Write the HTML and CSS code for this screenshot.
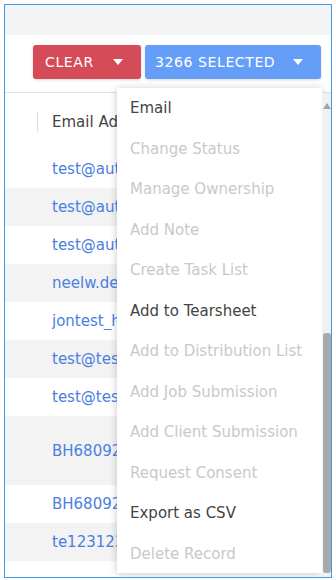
FILE: index.html
```html
<!DOCTYPE html>
<html lang="en">
<head>
    <meta charset="UTF-8">
    <meta name="viewport" content="width=device-width, initial-scale=1.0">
    <title>Records</title>
    <link rel="stylesheet" href="styles.css">
</head>
<body>

    <div class="frame">
        <div class="topbar"></div>

        <div class="toolbar">
            <button class="btn btn-clear">CLEAR <span class="caret"></span></button>
            <button class="btn btn-selected">3266&nbsp;SELECTED <span class="caret"></span></button>
        </div>

        <div class="table">
            <div class="head-row">
                <span class="sep"></span>
                <span class="cell head-cell">Email Address</span>
            </div>
            <div class="row"><a class="cell" href="#">test@automation.com</a></div>
            <div class="row"><a class="cell" href="#">test@automation.com</a></div>
            <div class="row"><a class="cell" href="#">test@automation.com</a></div>
            <div class="row"><a class="cell" href="#">neelw.demo@bullhorn.com</a></div>
            <div class="row"><a class="cell" href="#">jontest_hk@bullhorn.com</a></div>
            <div class="row"><a class="cell" href="#">test@test.com</a></div>
            <div class="row"><a class="cell" href="#">test@test.com</a></div>
            <div class="row row-tall"><a class="cell" href="#">BH680923@bullhorn.com</a></div>
            <div class="row"><a class="cell" href="#">BH680924@bullhorn.com</a></div>
            <div class="row"><a class="cell" href="#">te12312312@test.com</a></div>
        </div>

        <!-- actions menu -->
        <ul class="menu">
            <li>Email</li>
            <li class="off">Change Status</li>
            <li class="off">Manage Ownership</li>
            <li class="off">Add Note</li>
            <li class="off">Create Task List</li>
            <li>Add to Tearsheet</li>
            <li class="off">Add to Distribution List</li>
            <li class="off">Add Job Submission</li>
            <li class="off">Add Client Submission</li>
            <li class="off">Request Consent</li>
            <li>Export as CSV</li>
            <li class="off">Delete Record</li>
        </ul>

        <div class="scrollbar">
            <span class="arrow"></span>
            <span class="thumb"></span>
        </div>
    </div>

</body>
</html>
```

FILE: styles.css
```css
body {
    margin: 0;
    padding: 4px;
    background-color: #fff;
    font-family: 'DejaVu Sans', sans-serif;
    color: #444;
}

.frame {
    position: relative;
    width: 326px;
    height: 572px;
    border: 1px solid #3f9be8;
    overflow: hidden;
    background-color: #fff;
}

.topbar {
    height: 30px;
    background-color: #f4f4f4;
}

.toolbar {
    display: flex;
    justify-content: flex-end;
    gap: 4px;
    height: 47px;
    padding: 10px 10px 0 0;
    border-bottom: 1px solid #e2e2e2;
}

.btn {
    display: flex;
    align-items: center;
    justify-content: space-between;
    height: 34px;
    border: none;
    border-radius: 3px;
    color: #fff;
    font-family: inherit;
    font-size: 14px;
    letter-spacing: 0.6px;
    box-shadow: 0 1px 3px rgba(0, 0, 0, 0.15);
}

.btn-clear {
    width: 108px;
    padding: 0 18px 0 12px;
    background-color: #d54b58;
}

.btn-selected {
    width: 176px;
    padding: 0 18px 0 10px;
    background-color: #659ef8;
}

.caret {
    width: 0;
    height: 0;
    border-left: 5px solid transparent;
    border-right: 5px solid transparent;
    border-top: 6px solid #fff;
}

.head-row {
    display: flex;
    align-items: center;
    height: 57px;
    font-size: 15px;
    color: #444;
}

.sep {
    width: 1px;
    height: 20px;
    margin: 0 14px 0 32px;
    background-color: #ddd;
}

.cell {
    display: block;
    width: 65px;
    overflow: hidden;
    white-space: nowrap;
}

.row {
    display: flex;
    align-items: center;
    height: 38px;
    padding-left: 47px;
    font-size: 15px;
}

.row:nth-child(odd) {
    background-color: #f3f3f3;
}

.row-tall {
    height: 69px;
}

.row a {
    color: #4a80e2;
    text-decoration: none;
}

.menu {
    position: absolute;
    left: 112px;
    top: 83px;
    width: 205px;
    height: 485px;
    margin: 0;
    padding: 0;
    list-style: none;
    background-color: #fff;
    box-shadow: 0 1px 8px rgba(0, 0, 0, 0.22);
}

.menu li {
    height: 40.5px;
    line-height: 40.5px;
    padding-left: 13px;
    font-size: 15px;
    color: #444;
    white-space: nowrap;
}

.menu li.off {
    color: #c9c9c9;
}

.scrollbar {
    position: absolute;
    left: 317px;
    top: 87px;
    width: 9px;
    bottom: 0;
    background-color: #f1f1f1;
    border-top: 1px solid #ddd;
}

.arrow {
    display: block;
    width: 0;
    height: 0;
    margin: 10px auto 0;
    border-left: 4px solid transparent;
    border-right: 4px solid transparent;
    border-bottom: 6px solid #a3a3a3;
}

.thumb {
    position: absolute;
    left: 1px;
    right: 0;
    top: 240px;
    bottom: 4px;
    border-radius: 3px;
    background-color: #a9a9a9;
}
```
